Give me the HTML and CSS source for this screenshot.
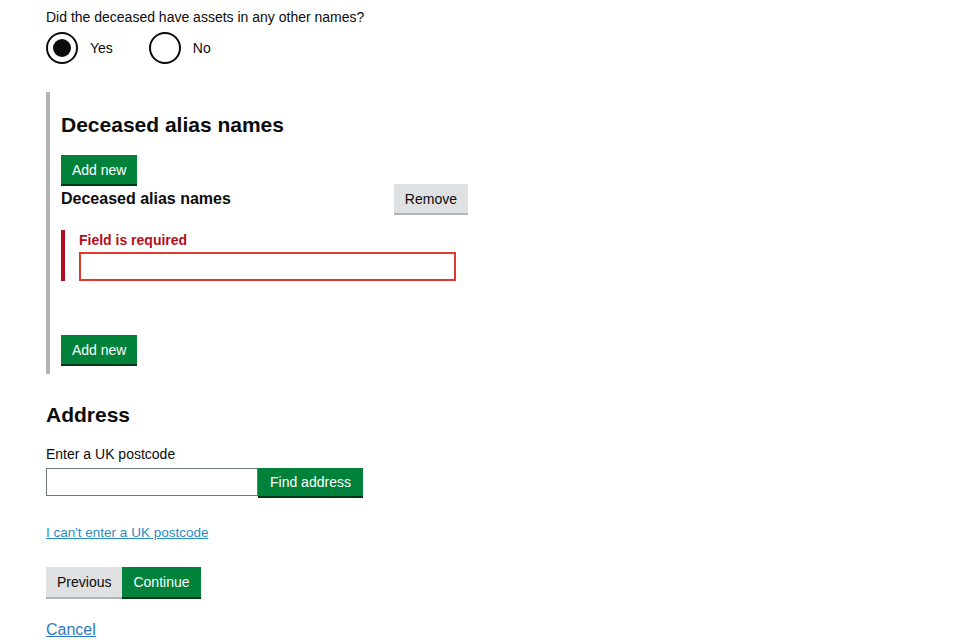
FILE: index.html
```html
<!DOCTYPE html>
<html lang="en">
<head>
    <meta charset="UTF-8">
    <title>Deceased details</title>
    <link rel="stylesheet" href="styles.css">
</head>
<body>
    <div class="page">
        <div class="question">Did the deceased have assets in any other names?</div>
        <div class="radios">
            <label class="radio"><span class="circle checked"></span>Yes</label>
            <label class="radio"><span class="circle"></span>No</label>
        </div>

        <div class="panel">
            <h2>Deceased alias names</h2>
            <button class="btn green">Add new</button>
            <div class="item-head">
                <h3>Deceased alias names</h3>
                <button class="btn grey">Remove</button>
            </div>
            <div class="error-group">
                <div class="error-msg">Field is required</div>
                <input class="text-input error" type="text">
            </div>
            <button class="btn green add-bottom">Add new</button>
        </div>

        <h2 class="address">Address</h2>
        <div class="label">Enter a UK postcode</div>
        <div class="postcode-row">
            <input class="text-input postcode" type="text">
            <button class="btn green find">Find address</button>
        </div>
        <a class="small-link" href="#">I can't enter a UK postcode</a>

        <div class="actions">
            <button class="btn grey">Previous</button>
            <button class="btn green">Continue</button>
        </div>
        <a class="cancel" href="#">Cancel</a>
    </div>
</body>
</html>
```

FILE: styles.css
```css
body {
    margin: 0;
    padding: 0;
    font-family: Arial, "Liberation Sans", sans-serif;
    color: #0b0c0c;
    background: #fff;
}

.page {
    padding: 8px 0 0 46px;
}

.question {
    font-size: 14px;
    line-height: 18px;
}

.radios {
    display: flex;
    gap: 36px;
    margin-top: 6px;
}

.radio {
    display: flex;
    align-items: center;
    font-size: 14px;
}

.circle {
    width: 28px;
    height: 28px;
    border: 2px solid #0b0c0c;
    border-radius: 50%;
    margin-right: 12px;
    position: relative;
}

.circle.checked::after {
    content: "";
    position: absolute;
    left: 5px;
    top: 5px;
    width: 18px;
    height: 18px;
    border-radius: 50%;
    background: #0b0c0c;
}

.panel {
    margin-top: 28px;
    border-left: 4px solid #b1b4b6;
    padding: 16px 0 10px 11px;
    width: 410px;
}

h2 {
    font-size: 21px;
    font-weight: bold;
    margin: 5px 0 18px;
    line-height: 24px;
}

h3 {
    font-size: 16px;
    font-weight: bold;
    margin: 0;
}

.btn {
    font-family: Arial, "Liberation Sans", sans-serif;
    font-size: 14px;
    border: none;
    padding: 0 11px;
    height: 29px;
    cursor: pointer;
    box-shadow: 0 2px 0 #003618;
}

.green {
    background: #00823b;
    color: #fff;
}

.grey {
    background: #dee0e2;
    color: #0b0c0c;
    box-shadow: 0 2px 0 #b1b4b6;
}

.item-head {
    display: flex;
    justify-content: space-between;
    align-items: center;
    width: 407px;
}

.error-group {
    margin-top: 17px;
    border-left: 4px solid #b10e1e;
    padding-left: 14px;
}

.error-msg {
    color: #b10e1e;
    font-size: 14px;
    font-weight: bold;
    line-height: 20px;
}

.text-input {
    box-sizing: border-box;
    height: 29px;
    border: 2px solid #0b0c0c;
    font-size: 14px;
    display: block;
}

.text-input.error {
    width: 377px;
    border-color: #e03a2f;
    margin-top: 2px;
}

.add-bottom {
    margin-top: 54px;
}

.address {
    margin-top: 29px;
    margin-bottom: 18px;
}

.label {
    font-size: 14px;
    line-height: 18px;
}

.postcode-row {
    display: flex;
    margin-top: 5px;
}

.postcode {
    width: 212px;
    height: 28px;
    border-color: #6f777b;
    border-width: 1px;
}

.find {
    height: 28px;
    padding: 0 12px;
    font-size: 14px;
}

.small-link {
    display: inline-block;
    margin-top: 29px;
    font-size: 13.5px;
    color: #2b8cc4;
}

.actions {
    display: flex;
    margin-top: 26px;
}

.actions .btn {
    height: 30px;
}

.cancel {
    display: inline-block;
    margin-top: 24px;
    font-size: 16px;
    color: #2b7bc4;
}
```
